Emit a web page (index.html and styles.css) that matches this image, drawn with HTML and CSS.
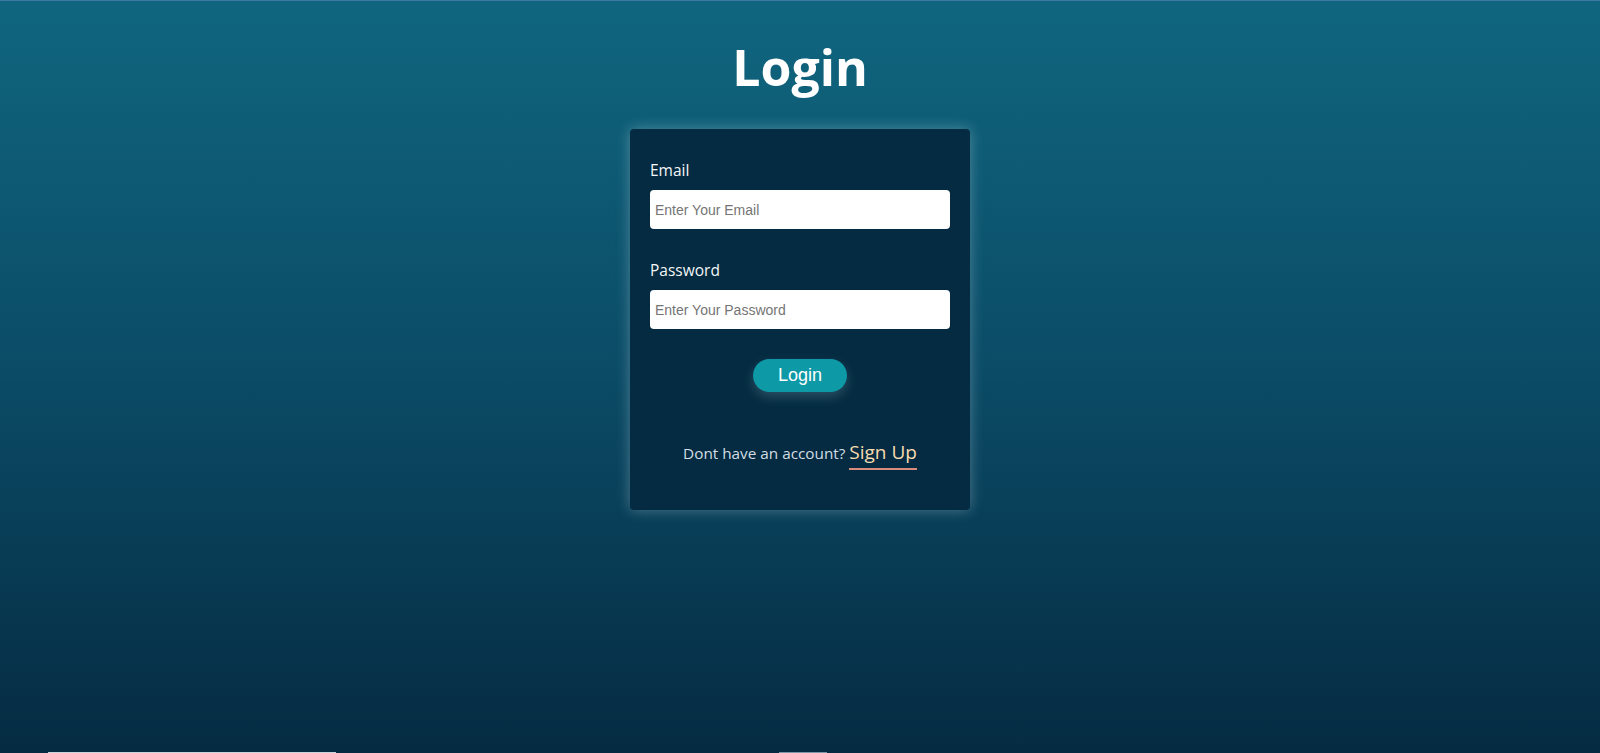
FILE: index.html
```html
<!DOCTYPE html>
<html lang="en">
<head>
<meta charset="utf-8">
<title>Login</title>
<link rel="stylesheet" href="styles.css">
</head>
<body>
<main class="page">
  <h1 class="title">Login</h1>
  <form class="card">
    <div class="field">
      <label class="label" for="email">Email</label>
      <input class="input" id="email" type="email" placeholder="Enter Your Email">
    </div>
    <div class="field">
      <label class="label" for="password">Password</label>
      <input class="input" id="password" type="password" placeholder="Enter Your Password">
    </div>
    <div class="actions">
      <button class="btn" type="button">Login</button>
    </div>
    <p class="signup">Dont have an account? <a class="signup-link" href="#">Sign Up</a></p>
  </form>
</main>
<div class="edge edge-left"></div>
<div class="edge edge-mid"></div>
</body>
</html>
```
FILE: styles.css
```css
html, body {
  margin: 0;
  padding: 0;
  height: 100%;
}
body {
  background: linear-gradient(to bottom, #10667f 0%, #0b4b66 50%, #052b42 100%);
  border-top: 1px solid #3b79a6;
  box-sizing: border-box;
  font-family: "Open Sans", "Noto Sans", sans-serif;
  position: relative;
  overflow: hidden;
}
.page {
  display: flex;
  flex-direction: column;
  align-items: center;
}
.title {
  margin: 33px 0 0;
  font-size: 50px;
  line-height: 66px;
  font-weight: 700;
  color: #ffffff;
}
.card {
  margin-top: 29px;
  width: 340px;
  box-sizing: border-box;
  padding: 31px 20px 45px;
  background: #042b41;
  border-radius: 4px;
  box-shadow: 0 0 14px rgba(200, 230, 240, 0.35);
  display: flex;
  flex-direction: column;
}
.field {
  display: flex;
  flex-direction: column;
  margin-bottom: 31px;
}
.field + .field {
  margin-bottom: 28px;
}
.label {
  color: #f4f6f8;
  font-size: 15.5px;
  line-height: 20px;
  margin-bottom: 10px;
}
.input {
  height: 39px;
  box-sizing: border-box;
  border: none;
  border-radius: 4px;
  padding: 0 5px;
  font-family: "Liberation Sans", Arial, sans-serif;
  font-size: 14px;
  background: #ffffff;
  outline: none;
}
.input::placeholder {
  color: #757575;
}
.actions {
  display: flex;
  justify-content: center;
  margin-top: 2px;
}
.btn {
  width: 94px;
  height: 33px;
  border: none;
  border-radius: 17px;
  background: #0e99a6;
  color: #ffffff;
  font-family: "Liberation Sans", Arial, sans-serif;
  font-size: 18px;
  box-shadow: 0 5px 12px rgba(200, 230, 240, 0.2);
  cursor: pointer;
}
.signup {
  margin: 48px 0 0;
  text-align: center;
  color: #d3dde3;
  font-size: 15.3px;
  line-height: 24px;
}
.signup-link {
  color: #f7dcb0;
  font-size: 19px;
  text-decoration: none;
  border-bottom: 2px solid #d98b7c;
  padding-bottom: 3px;
}
.edge {
  position: absolute;
  bottom: 0;
  height: 1px;
}
.edge-left {
  left: 48px;
  width: 288px;
  background: #c9d5dc;
}
.edge-mid {
  left: 779px;
  width: 48px;
  background: #7c98a8;
}
```
